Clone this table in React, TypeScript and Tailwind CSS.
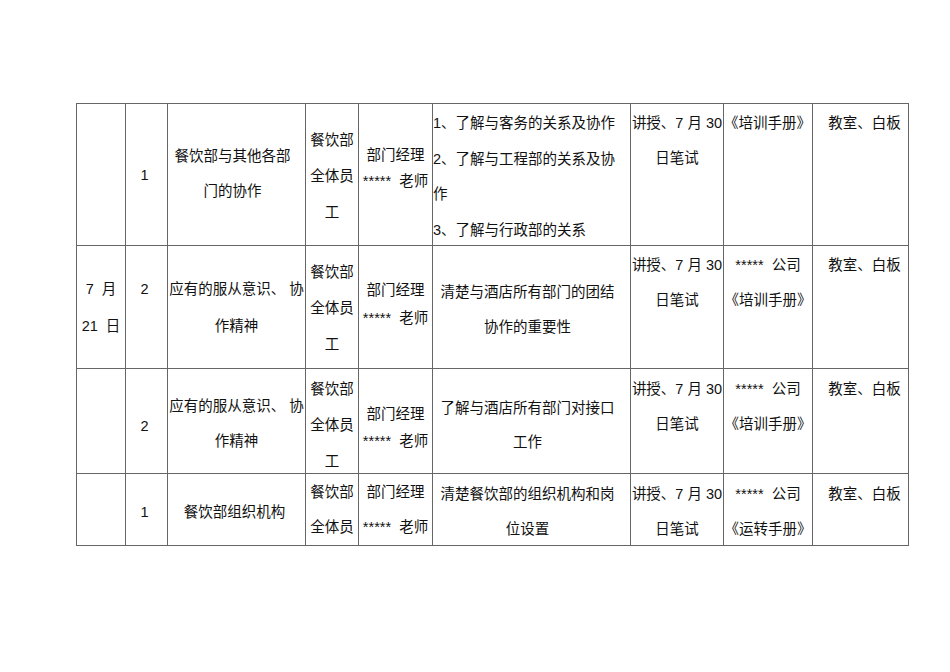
import React from "react";

type Cell = {
  lines: string[];
  cls: string;
  left?: boolean;
};

type Row = {
  h: string;
  cells: Cell[];
};

const colW = [
  "w-[49px]",
  "w-[42px]",
  "w-[138px]",
  "w-[53px]",
  "w-[74px]",
  "w-[198px]",
  "w-[93px]",
  "w-[89px]",
  "w-[96px]",
];

const rows: Row[] = [
  {
    h: "h-[142px]",
    cells: [
      { lines: [], cls: "" },
      { lines: ["1"], cls: "pt-[54px] leading-[35px] pr-[4px]" },
      { lines: ["餐饮部与其他各部", "门的协作"], cls: "pt-[35px] leading-[35px] pr-[8px]" },
      { lines: ["餐饮部", "全体员", "工"], cls: "pt-[18px] leading-[36px]" },
      { lines: ["部门经理", "*****  老师"], cls: "pt-[38px] leading-[26px]" },
      {
        lines: ["1、了解与客务的关系及协作", "2、了解与工程部的关系及协", "作", "3、了解与行政部的关系"],
        cls: "pt-[2px] leading-[35.5px]",
        left: true,
      },
      { lines: ["讲授、7 月 30", "日笔试"], cls: "pt-[2px] leading-[35px]" },
      { lines: ["《培训手册》"], cls: "pt-[2px] leading-[35px] pr-[8px]" },
      { lines: ["教室、白板"], cls: "pt-[2px] leading-[35px] pl-[8px]" },
    ],
  },
  {
    h: "h-[123px]",
    cells: [
      { lines: ["7  月", "21  日"], cls: "pt-[25px] leading-[37px]" },
      { lines: ["2"], cls: "pt-[25px] leading-[37px] pr-[4px]" },
      { lines: ["应有的服从意识、 协", "作精神"], cls: "pt-[25px] leading-[37px]" },
      { lines: ["餐饮部", "全体员", "工"], cls: "pt-[8px] leading-[36px]" },
      { lines: ["部门经理", "*****  老师"], cls: "pt-[30px] leading-[28px]" },
      { lines: ["清楚与酒店所有部门的团结", "协作的重要性"], cls: "pt-[29px] leading-[35px] pr-[8px]" },
      { lines: ["讲授、7 月 30", "日笔试"], cls: "pt-[2px] leading-[35px]" },
      { lines: ["*****  公司", "《培训手册》"], cls: "pt-[2px] leading-[35px]" },
      { lines: ["教室、白板"], cls: "pt-[2px] leading-[35px] pl-[8px]" },
    ],
  },
  {
    h: "h-[105px]",
    cells: [
      { lines: [], cls: "" },
      { lines: ["2"], cls: "pt-[40px] leading-[35px] pr-[4px]" },
      { lines: ["应有的服从意识、 协", "作精神"], cls: "pt-[20px] leading-[35px]" },
      { lines: ["餐饮部", "全体员", "工"], cls: "pt-[2px] leading-[36px]" },
      { lines: ["部门经理", "*****  老师"], cls: "pt-[32px] leading-[27px]" },
      { lines: ["了解与酒店所有部门对接口", "工作"], cls: "pt-[22px] leading-[34px] pr-[8px]" },
      { lines: ["讲授、7 月 30", "日笔试"], cls: "pt-[3px] leading-[35px]" },
      { lines: ["*****  公司", "《培训手册》"], cls: "pt-[3px] leading-[35px]" },
      { lines: ["教室、白板"], cls: "pt-[3px] leading-[35px] pl-[8px]" },
    ],
  },
  {
    h: "h-[72px]",
    cells: [
      { lines: [], cls: "" },
      { lines: ["1"], cls: "pt-[21px] leading-[35px] pr-[4px]" },
      { lines: ["餐饮部组织机构"], cls: "pt-[21px] leading-[35px] pr-[4px]" },
      { lines: ["餐饮部", "全体员"], cls: "pt-[1px] leading-[35px]" },
      { lines: ["部门经理", "*****  老师"], cls: "pt-[1px] leading-[35px]" },
      { lines: ["清楚餐饮部的组织机构和岗", "位设置"], cls: "pt-[3px] leading-[35px] pr-[8px]" },
      { lines: ["讲授、7 月 30", "日笔试"], cls: "pt-[3px] leading-[35px]" },
      { lines: ["*****  公司", "《运转手册》"], cls: "pt-[3px] leading-[35px]" },
      { lines: ["教室、白板"], cls: "pt-[3px] leading-[35px] pl-[8px]" },
    ],
  },
];

export default function App() {
  return (
    <div
      className="w-[950px] h-[672px] bg-white text-[#111] text-[14.5px]"
      style={{ fontFamily: '"Liberation Sans", "Noto Sans CJK SC", sans-serif' }}
    >
      <div className="pt-[103px] pl-[76px]">
        <div className="inline-flex flex-col border-l border-t border-[#666]">
          {rows.map((row, ri) => (
            <div key={ri} className={`flex ${row.h}`}>
              {row.cells.map((cell, ci) => (
                <div
                  key={ci}
                  className={`${colW[ci]} shrink-0 border-r border-b border-[#666] overflow-hidden ${cell.cls} ${
                    cell.left ? "text-left" : "text-center"
                  }`}
                >
                  {cell.lines.map((line, li) => (
                    <div key={li} className="whitespace-pre">
                      {line}
                    </div>
                  ))}
                </div>
              ))}
            </div>
          ))}
        </div>
      </div>
    </div>
  );
}
